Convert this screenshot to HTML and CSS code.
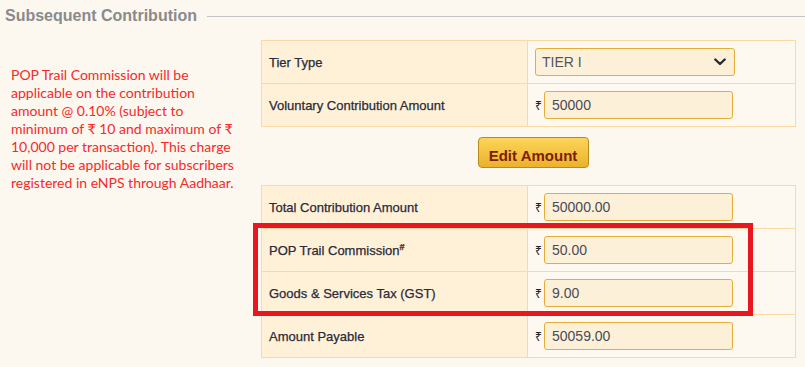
FILE: index.html
```html
<!DOCTYPE html>
<html lang="en">
<head>
<meta charset="utf-8">
<title>Subsequent Contribution</title>
<link rel="stylesheet" href="styles.css">
</head>
<body>
<div class="page">
  <div class="legend">
    <span class="legend-title">Subsequent Contribution</span>
    <span class="legend-line"></span>
  </div>
  <div class="content">
    <div class="note">
      POP Trail Commission will be<br>
      applicable on the contribution<br>
      amount @ 0.10% (subject to<br>
      minimum of ₹ 10 and maximum of ₹<br>
      10,000 per transaction). This charge<br>
      will not be applicable for subscribers<br>
      registered in eNPS through Aadhaar.
    </div>
    <div class="main">
      <table class="grid">
        <colgroup><col class="c-label"><col class="c-value"></colgroup>
        <tr>
          <td class="label">Tier Type</td>
          <td class="value">
            <div class="select">
              <span>TIER I</span>
              <svg class="chev" width="12" height="8" viewBox="0 0 12 8"><path d="M1.3 1.5 L6 6 L10.7 1.5" fill="none" stroke="#2b2b2b" stroke-width="2.4" stroke-linecap="round" stroke-linejoin="round"/></svg>
            </div>
          </td>
        </tr>
        <tr>
          <td class="label">Voluntary Contribution Amount</td>
          <td class="value"><span class="rs">₹</span><span class="field">50000</span></td>
        </tr>
      </table>
      <div class="btn-row"><button class="btn">Edit Amount</button></div>
      <table class="grid">
        <colgroup><col class="c-label"><col class="c-value"></colgroup>
        <tr>
          <td class="label">Total Contribution Amount</td>
          <td class="value"><span class="rs">₹</span><span class="field">50000.00</span></td>
        </tr>
        <tr>
          <td class="label">POP Trail Commission<sup class="hash">#</sup></td>
          <td class="value"><span class="rs">₹</span><span class="field">50.00</span></td>
        </tr>
        <tr>
          <td class="label">Goods &amp; Services Tax (GST)</td>
          <td class="value"><span class="rs">₹</span><span class="field">9.00</span></td>
        </tr>
        <tr>
          <td class="label">Amount Payable</td>
          <td class="value"><span class="rs">₹</span><span class="field">50059.00</span></td>
        </tr>
      </table>
    </div>
  </div>
  <div class="highlight"></div>
</div>
</body>
</html>
```
FILE: styles.css
```css
html, body {
  margin: 0;
  padding: 0;
  background: #fcf8f0;
}
.page {
  position: relative;
  width: 805px;
  height: 367px;
  overflow: hidden;
  font-family: "Liberation Sans", Arial, sans-serif;
}
.legend {
  display: flex;
  align-items: center;
  height: 32px;
  padding-left: 5px;
}
.legend-title {
  font-size: 16px;
  font-weight: bold;
  color: #8a8a8a;
  white-space: nowrap;
}
.legend-line {
  flex: 1;
  height: 1px;
  margin-left: 10px;
  background: #c4c4c4;
}
.content {
  display: flex;
  margin-top: 8px;
}
.note {
  box-sizing: border-box;
  width: 261px;
  padding: 26px 0 0 11px;
  font-family: Lato, "Noto Sans", sans-serif;
  font-size: 14px;
  line-height: 18px;
  color: #f52a2a;
  white-space: nowrap;
}
.main {
  width: 544px;
}
.grid {
  width: 534px;
  table-layout: fixed;
  border-collapse: separate;
  border-spacing: 0;
  border-top: 1px solid #fad9a3;
  border-left: 1px solid #fad9a3;
}
.c-label { width: 266px; }
.c-value { width: 268px; }
.grid td {
  height: 42px;
  padding: 0;
  border-right: 1px solid #fad9a3;
  border-bottom: 1px solid #fad9a3;
  vertical-align: middle;
}
.label {
  padding-left: 7px !important;
  background: #fff1d8;
  font-size: 13px;
  color: #2a2a3a;
  -webkit-text-stroke: 0.25px #2a2a3a;
  white-space: nowrap;
}
.hash {
  font-size: 9px;
  line-height: 0;
  font-weight: bold;
}
.value {
  padding-left: 7px !important;
  background: #fdf9f1;
  white-space: nowrap;
}
.value > * {
  vertical-align: middle;
}
.rs {
  display: inline-block;
  width: 9px;
  font-family: "Noto Sans", "DejaVu Sans", sans-serif;
  font-size: 12px;
  color: #222;
}
.field, .select {
  box-sizing: border-box;
  display: inline-flex;
  align-items: center;
  height: 28px;
  border: 1px solid #e8ad38;
  border-radius: 3px;
  background: #fdf0d9;
  font-size: 14px;
  color: #4a4a55;
}
.field {
  width: 189px;
  padding-left: 7px;
}
.select {
  width: 200px;
  padding: 0 8px 0 6px;
  justify-content: space-between;
  color: #555560;
}
.chev {
  display: block;
}
.btn-row {
  display: flex;
  justify-content: center;
  margin: 10px 0 17px;
}
.btn {
  box-sizing: border-box;
  width: 111px;
  height: 31px;
  padding: 5px 0 0;
  border: 1px solid #b88a1a;
  border-radius: 4px;
  background: linear-gradient(#fdd45a, #eab22c);
  font-family: "Liberation Sans", Arial, sans-serif;
  font-size: 15px;
  font-weight: bold;
  color: #7d1d0a;
}
.highlight {
  position: absolute;
  left: 253px;
  top: 223px;
  width: 490px;
  height: 83px;
  border: 5px solid #e8161e;
}
```
